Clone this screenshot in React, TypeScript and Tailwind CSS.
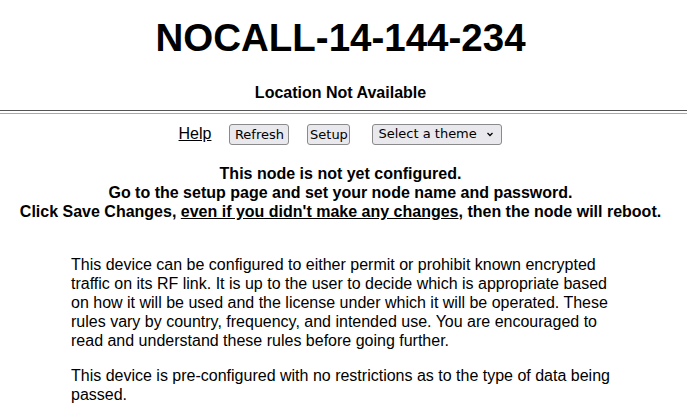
export default function App() {
  return (
    <div className="min-h-screen bg-white text-black" style={{ fontFamily: '"Liberation Sans", Arial, sans-serif' }}>
      <div className="pr-[6px] pt-[16px] text-center">
        <h1 className="text-[38.5px] font-bold leading-[44px]">NOCALL-14-144-234</h1>
        <div className="mt-[24px] text-[16px] font-bold leading-[18px]">Location Not Available</div>
      </div>
      <div className="mt-[8px] h-[4px] border-t border-b border-t-[#555] border-b-[#aaa]" />

      <nav className="mt-[8px] flex items-center justify-center gap-[18px] pr-[6px]">
        <a href="#" className="text-[16px] underline">Help</a>
        <button className="h-[21px] w-[60px] rounded-[3px] border border-[#8a8a8a] bg-[#e9e9ed] text-[13px] leading-none" style={{ fontFamily: '"DejaVu Sans", sans-serif' }}>Refresh</button>
        <button className="h-[21px] w-[43px] rounded-[3px] border border-[#8a8a8a] bg-[#e9e9ed] text-[13px] leading-none" style={{ fontFamily: '"DejaVu Sans", sans-serif' }}>Setup</button>
        <div className="ml-[4px] flex h-[21px] w-[130px] items-center justify-between rounded-[3px] border border-[#8a8a8a] bg-[#e9e9ed] pl-[5px] pr-[6px] text-[13px]" style={{ fontFamily: '"DejaVu Sans", sans-serif' }}>
          <span>Select a theme</span>
          <svg width="10" height="10" viewBox="0 0 10 10">
            <path d="M2.5 4 L5 6.5 L7.5 4" stroke="black" strokeWidth="1.3" fill="none" />
          </svg>
        </div>
      </nav>

      <div className="mt-[18px] pr-[6px] text-center text-[16px] font-bold leading-[19px]">
        <div>This node is not yet configured.</div>
        <div>Go to the setup page and set your node name and password.</div>
        <div>
          Click Save Changes, <span className="underline">even if you didn't make any changes</span>, then the node will reboot.
        </div>
      </div>

      <div className="ml-[71px] mt-[34px] w-[550px] text-[16px] leading-[19px]">
        <p>
          This device can be configured to either permit or prohibit known encrypted traffic on its RF link. It is up to the user to decide which is appropriate based on how it will be used and the license under which it will be operated. These rules vary by country, frequency, and intended use. You are encouraged to read and understand these rules before going further.
        </p>
        <p className="mt-[16px]">
          This device is pre-configured with no restrictions as to the type of data being passed.
        </p>
      </div>
    </div>
  );
}
